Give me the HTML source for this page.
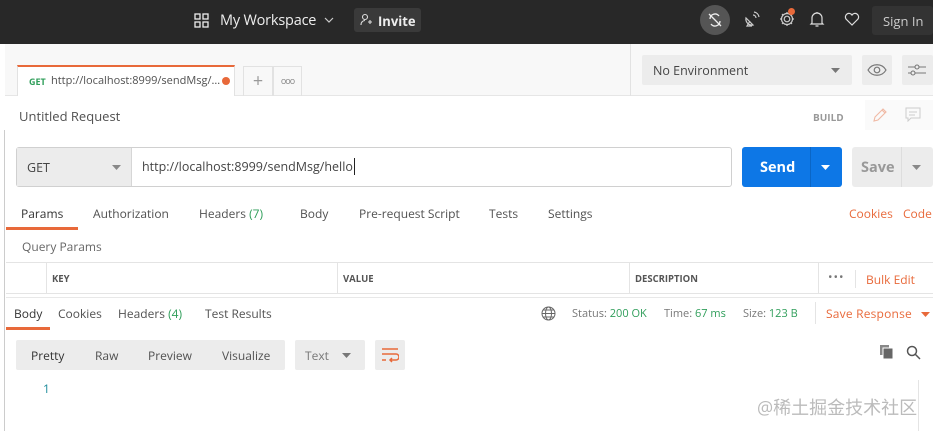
<!DOCTYPE html>
<html><head><meta charset="utf-8"><style>
*{box-sizing:border-box;margin:0;padding:0}
body{width:933px;height:431px;overflow:hidden;background:#fff;font-family:"Open Sans","Liberation Sans","Noto Sans CJK SC",sans-serif;font-size:12px;color:#505050;position:relative}
.a{position:absolute;white-space:nowrap}
.t{margin-top:-1px}
.top{left:0;top:0;width:933px;height:44px;background:#282828}
.g{color:#2f9e5a}
.o{color:#e8693a}
</style></head><body>
<div class="a top"></div>
<svg class="a" style="left:194px;top:13px" width="15" height="15" viewBox="0 0 15 15" fill="none" stroke="#eee" stroke-width="1.3"><rect x="1" y="1" width="5" height="5"/><rect x="9" y="1" width="5" height="5"/><rect x="1" y="9" width="5" height="5"/><rect x="9" y="9" width="5" height="5"/></svg>
<div class="a" style="left:220px;top:11px;color:#eee;font-size:14.5px;letter-spacing:-0.2px">My Workspace</div>
<svg class="a" style="left:324px;top:17px" width="10" height="6" viewBox="0 0 10 6"><path d="M1 1l4 4 4-4" stroke="#ccc" fill="none" stroke-width="1.2"/></svg>
<div class="a" style="left:354px;top:8px;width:67px;height:24px;background:#3a3a3a;border-radius:3px"></div>
<svg class="a" style="left:360px;top:13px" width="12" height="13" viewBox="0 0 12 13" fill="none" stroke="#ddd" stroke-width="1.1"><circle cx="5" cy="4" r="2.5"/><path d="M1 12c0-3 2-4.5 4-4.5M8 9h4M10 7v4"/></svg>
<div class="a" style="left:378px;top:12px;color:#eee;font-size:13px;font-weight:bold">Invite</div>
<div class="a" style="left:700px;top:5px;width:30px;height:30px;border-radius:50%;background:#555"></div>
<svg class="a" style="left:705px;top:10px" width="20" height="20" viewBox="0 0 20 20" fill="none" stroke="#eee" stroke-width="1.3"><path d="M5 9a5 5 0 0 1 9-3M15 11a5 5 0 0 1-9 3M4 4l12 12"/></svg>
<svg class="a" style="left:743px;top:10px" width="18" height="18" viewBox="0 0 18 18" fill="none" stroke="#ccc" stroke-width="1.2"><path d="M3 8a6 6 0 0 0 7 7L3 8zM7 11l-3 5h5M10 5a3 3 0 0 1 3 3M11 2a6 6 0 0 1 5 5"/></svg>
<svg class="a" style="left:778px;top:10px" width="18" height="18" viewBox="0 0 18 18" fill="none" stroke="#ccc" stroke-width="1.2"><circle cx="9" cy="9" r="2.8"/><path d="M9 2v2M9 14v2M2 9h2M14 9h2M4 4l1.5 1.5M12.5 12.5L14 14M4 14l1.5-1.5M12.5 5.5L14 4"/><circle cx="9" cy="9" r="5.5"/></svg>
<div class="a" style="left:788px;top:8px;width:7px;height:7px;border-radius:50%;background:#e8693a"></div>
<svg class="a" style="left:809px;top:10px" width="16" height="18" viewBox="0 0 16 18" fill="none" stroke="#ddd" stroke-width="1.2"><path d="M3 13V8a5 5 0 0 1 10 0v5l1 1H2zM6.5 16h3M8 2v1"/></svg>
<svg class="a" style="left:844px;top:12px" width="16" height="15" viewBox="0 0 16 15" fill="none" stroke="#ddd" stroke-width="1.2"><path d="M8 13L2 7a3.3 3.3 0 0 1 6-4 3.3 3.3 0 0 1 6 4z"/></svg>
<div class="a" style="left:872px;top:6px;width:61px;height:29px;background:#333;border-radius:3px"></div>
<div class="a" style="left:883px;top:12px;color:#ccc;font-size:13px">Sign In</div>
<div class="a" style="left:5px;top:44px;width:928px;height:52px;background:#f8f8f8;border-bottom:1px solid #e6e6e6"></div>
<div class="a" style="left:630px;top:44px;width:1px;height:52px;background:#e2e2e2"></div>
<div class="a" style="left:17px;top:65px;width:218px;height:31px;background:#fff;border-top:2px solid #e8693a;border-left:1px solid #e2e2e2;border-right:1px solid #e2e2e2"></div>
<div class="a" style="left:29px;top:75px;font-size:9px;font-weight:bold;color:#2f9e5a">GET</div>
<div class="a" style="left:51px;top:73px;font-size:11px;color:#505050">http://localhost:8999/sendMsg/...</div>
<div class="a" style="left:222px;top:77px;width:8px;height:8px;border-radius:50%;background:#e8693a"></div>
<div class="a" style="left:243px;top:66px;width:30px;height:30px;border:1px solid #e2e2e2;border-bottom:none;color:#999;font-size:18px;text-align:center;line-height:28px">+</div>
<div class="a" style="left:273px;top:66px;width:29px;height:30px;border:1px solid #e2e2e2;border-bottom:none;color:#888;font-size:9px;text-align:center;line-height:28px;letter-spacing:-1px">ooo</div>
<div class="a" style="left:642px;top:55px;width:210px;height:30px;background:#ececec;border-radius:2px"></div>
<div class="a" style="left:653px;top:62px;font-size:12.5px;color:#444">No Environment</div>
<svg class="a" style="left:831px;top:68px" width="9" height="5"><path d="M0 0h9L4.5 5z" fill="#777"/></svg>
<div class="a" style="left:862px;top:55px;width:30px;height:30px;background:#ececec;border-radius:2px"></div>
<svg class="a" style="left:867px;top:63px" width="20" height="14" viewBox="0 0 20 14" fill="none" stroke="#777" stroke-width="1.2"><path d="M1 7c4-7 14-7 18 0-4 7-14 7-18 0z"/><circle cx="10" cy="7" r="2.8"/></svg>
<div class="a" style="left:902px;top:55px;width:31px;height:30px;background:#ececec;border-radius:2px"></div>
<svg class="a" style="left:908px;top:63px" width="18" height="14" viewBox="0 0 18 14" fill="none" stroke="#777" stroke-width="1.1"><path d="M0 4h7M11 4h7M0 10h3M7 10h11"/><circle cx="9" cy="4" r="2"/><circle cx="5" cy="10" r="2"/></svg>
<div class="a" style="left:19px;top:107px;font-size:13px;color:#505050">Untitled Request</div>
<div class="a" style="left:813px;top:110px;font-size:10px;font-weight:bold;color:#999">BUILD</div>
<div class="a" style="left:865px;top:100px;width:68px;height:30px;background:#fafafa"></div>
<svg class="a" style="left:872px;top:107px" width="16" height="16" viewBox="0 0 16 16" fill="none" stroke="#f0b9a4" stroke-width="1.1"><path d="M2 14l1-4 8-8 3 3-8 8zM10 3l3 3"/></svg>
<svg class="a" style="left:905px;top:107px" width="16" height="15" viewBox="0 0 16 15" fill="none" stroke="#ccc" stroke-width="1"><path d="M1 1h14v10H6l-3 3v-3H1zM4 5h8M4 8h6"/></svg>
<div class="a" style="left:0;top:130px;width:5px;height:301px;background:#fff;border-right:1px solid #ccc"></div>
<div class="a" style="left:16px;top:147px;width:716px;height:40px;border:1px solid #d0d0d0;border-radius:3px;background:#fff"></div>
<div class="a" style="left:17px;top:148px;width:115px;height:38px;background:#ececec;border-right:1px solid #d6d6d6"></div>
<div class="a" style="left:27px;top:159px;font-size:12.5px;color:#444">GET</div>
<svg class="a" style="left:112px;top:165px" width="9" height="5"><path d="M0 0h9L4.5 5z" fill="#888"/></svg>
<div class="a" style="left:142px;top:158px;font-size:12.5px;color:#444">http://localhost:8999/sendMsg/hello<span style="border-left:1px solid #222;margin-left:1px"></span></div>
<div class="a" style="left:742px;top:147px;width:100px;height:40px;background:#0d77e6;border-radius:3px"></div>
<div class="a" style="left:810px;top:147px;width:1px;height:40px;background:#0a66c6"></div>
<div class="a" style="left:760px;top:158px;font-size:14.5px;font-weight:bold;color:#fff">Send</div>
<svg class="a" style="left:821px;top:165px" width="9" height="5"><path d="M0 0h9L4.5 5z" fill="#fff"/></svg>
<div class="a" style="left:852px;top:147px;width:81px;height:40px;background:#ececec;border-radius:3px"></div>
<div class="a" style="left:901px;top:147px;width:1px;height:40px;background:#ddd"></div>
<div class="a" style="left:861px;top:158px;font-size:14.5px;font-weight:bold;color:#999">Save</div>
<svg class="a" style="left:912px;top:165px" width="9" height="5"><path d="M0 0h9L4.5 5z" fill="#888"/></svg>
<div class="a" style="left:21px;top:205px;font-size:12px;color:#333">Params</div>
<div class="a" style="left:6px;top:227px;width:72px;height:3px;background:#e8693a"></div>
<div class="a" style="left:93px;top:205px">Authorization</div>
<div class="a" style="left:199px;top:205px">Headers <span class="g">(7)</span></div>
<div class="a" style="left:300px;top:205px">Body</div>
<div class="a" style="left:359px;top:205px">Pre-request Script</div>
<div class="a" style="left:489px;top:205px">Tests</div>
<div class="a" style="left:548px;top:205px">Settings</div>
<div class="a o" style="left:849px;top:205px">Cookies</div>
<div class="a o" style="left:903px;top:205px">Code</div>
<div class="a" style="left:22px;top:238px;font-size:12px;color:#666">Query Params</div>
<div class="a" style="left:6px;top:262px;width:927px;height:1px;background:#e4e4e4"></div>
<div class="a" style="left:6px;top:293px;width:927px;height:1px;background:#e4e4e4"></div>
<div class="a" style="left:46px;top:263px;width:1px;height:31px;background:#e4e4e4"></div>
<div class="a" style="left:337px;top:263px;width:1px;height:31px;background:#e4e4e4"></div>
<div class="a" style="left:629px;top:263px;width:1px;height:31px;background:#e4e4e4"></div>
<div class="a" style="left:818px;top:263px;width:1px;height:31px;background:#e4e4e4"></div>
<div class="a" style="left:855px;top:270px;width:1px;height:18px;background:#e4e4e4"></div>
<div class="a" style="left:52px;top:272px;font-size:9.5px;font-weight:bold;color:#555">KEY</div>
<div class="a" style="left:343px;top:272px;font-size:9.5px;font-weight:bold;color:#555">VALUE</div>
<div class="a" style="left:635px;top:272px;font-size:9.5px;font-weight:bold;color:#555">DESCRIPTION</div>
<div class="a" style="left:828px;top:268px;font-size:12px;color:#777;letter-spacing:1px">•••</div>
<div class="a o" style="left:866px;top:271px">Bulk Edit</div>
<div class="a" style="left:6px;top:297px;width:927px;height:1px;background:#e8e8e8"></div>
<div class="a" style="left:14px;top:305px;color:#333">Body</div>
<div class="a" style="left:6px;top:327px;width:44px;height:3px;background:#e8693a"></div>
<div class="a" style="left:58px;top:305px">Cookies</div>
<div class="a" style="left:118px;top:305px">Headers <span class="g">(4)</span></div>
<div class="a" style="left:205px;top:305px">Test Results</div>
<svg class="a" style="left:541px;top:306px" width="15" height="15" viewBox="0 0 15 15" fill="none" stroke="#666" stroke-width="1"><circle cx="7.5" cy="7.5" r="6.5"/><ellipse cx="7.5" cy="7.5" rx="3" ry="6.5"/><path d="M1 7.5h13M2 4h11M2 11h11"/></svg>
<div class="a" style="left:572px;top:306px;font-size:11px;color:#777">Status: <span class="g">200 OK</span></div>
<div class="a" style="left:664px;top:306px;font-size:11px;color:#777">Time: <span class="g">67 ms</span></div>
<div class="a" style="left:743px;top:306px;font-size:11px;color:#777">Size: <span class="g">123 B</span></div>
<div class="a" style="left:815px;top:302px;width:1px;height:22px;background:#e4e4e4"></div>
<div class="a o" style="left:826px;top:305px;letter-spacing:0.2px">Save Response</div>
<svg class="a" style="left:921px;top:312px" width="9" height="5"><path d="M0 0h9L4.5 5z" fill="#e8693a"/></svg>
<div class="a" style="left:16px;top:340px;width:269px;height:30px;background:#ececec;border-radius:2px"></div>
<div class="a" style="left:31px;top:347px;color:#333">Pretty</div>
<div class="a" style="left:95px;top:347px">Raw</div>
<div class="a" style="left:148px;top:347px">Preview</div>
<div class="a" style="left:222px;top:347px">Visualize</div>
<div class="a" style="left:295px;top:340px;width:70px;height:30px;background:#ececec;border-radius:2px"></div>
<div class="a" style="left:305px;top:347px;color:#777">Text</div>
<svg class="a" style="left:342px;top:353px" width="9" height="5"><path d="M0 0h9L4.5 5z" fill="#777"/></svg>
<div class="a" style="left:375px;top:340px;width:30px;height:30px;background:#ececec;border-radius:2px"></div>
<svg class="a" style="left:381px;top:347px" width="18" height="16" viewBox="0 0 18 16" fill="none" stroke="#e8693a" stroke-width="1.5"><path d="M1 2h16M1 7h14a3 3 0 0 1 0 6H9M11 11l-2 2 2 2M1 13h4"/></svg>
<svg class="a" style="left:880px;top:345px" width="14" height="15" viewBox="0 0 14 15"><rect x="0" y="0" width="9" height="10" fill="#888"/><rect x="3" y="3" width="10" height="11" fill="#666" stroke="#fff" stroke-width="1"/></svg>
<svg class="a" style="left:906px;top:345px" width="15" height="15" viewBox="0 0 15 15" fill="none" stroke="#555" stroke-width="1.5"><circle cx="6" cy="6" r="4.5"/><path d="M9.5 9.5L14 14"/></svg>
<div class="a" style="left:43px;top:380px;color:#1a8a9a;font-size:12px">1</div>
<div class="a" style="left:918px;top:380px;width:1px;height:51px;background:#e4e4e4"></div>
<div class="a" style="left:757px;top:394px;font-size:18px;color:#bbb">@稀土掘金技术社区</div>
</body></html>
